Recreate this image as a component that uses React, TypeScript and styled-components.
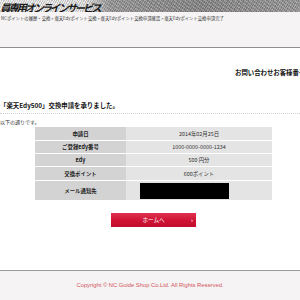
import React from "react";
import styled, { createGlobalStyle } from "styled-components";

const Global = createGlobalStyle`
  html, body { margin: 0; padding: 0; background: #fff; }
  body { width: 300px; height: 300px; overflow: hidden; font-family: "Noto Sans CJK JP", "Liberation Sans", sans-serif; color: #222; }
`;

const Page = styled.div`
  width: 300px;
  height: 300px;
  display: flex;
  flex-direction: column;
`;

const Header = styled.div`
  height: 12px;
  overflow: hidden;
  display: flex;
  align-items: flex-end;
  background:
    repeating-linear-gradient(37deg, rgba(255,255,255,0.22) 0 1px, transparent 1px 3px),
    repeating-linear-gradient(-61deg, rgba(0,0,0,0.18) 0 1px, transparent 1px 2px),
    linear-gradient(90deg, #f2f2f2 0px, #e6e6e6 85px, #9a9a9a 110px, #888 200px, #9a9a9a 300px);
`;

const HeaderTitle = styled.span`
  font-size: 10.5px;
  line-height: 11px;
  font-weight: 700;
  font-style: italic;
  letter-spacing: -2.2px;
  color: #1a1a1a;
  white-space: nowrap;
  margin-bottom: -1px;
`;

const Crumbs = styled.div`
  height: 36px;
  background: #f5f3f3;
  border-bottom: 1px solid #8e8e8e;
  padding: 3px 0 0 1px;
  box-sizing: border-box;
  font-size: 4.35px;
  line-height: 7px;
  color: #333;
  white-space: nowrap;
  overflow: hidden;
`;

const Main = styled.div`
  flex: 1;
  display: flex;
  flex-direction: column;
`;

const Contact = styled.div`
  margin-top: 21px;
  padding-left: 235px;
  font-size: 6.4px;
  line-height: 8px;
  font-weight: 700;
  white-space: nowrap;
  overflow: hidden;
  color: #111;
`;

const Title = styled.div`
  margin-top: 25px;
  font-size: 6.4px;
  line-height: 8px;
  font-weight: 700;
  padding-bottom: 3px;
  border-bottom: 1px dotted #cfcfcf;
  color: #111;
`;

const Note = styled.div`
  margin-top: 4px;
  font-size: 5px;
  line-height: 7px;
  color: #333;
`;

const Table = styled.div`
  margin: 2px 0 0 35px;
  width: 237px;
  display: grid;
  grid-template-columns: 91px 146px;
  row-gap: 1px;
`;

const Label = styled.div<{ $h: number }>`
  height: ${(p) => p.$h}px;
  background: #d3d3d3;
  display: flex;
  align-items: center;
  justify-content: center;
  font-size: 5.4px;
  font-weight: 700;
  color: #222;
`;

const Value = styled.div<{ $h: number }>`
  height: ${(p) => p.$h}px;
  background: #e4e4e4;
  display: flex;
  align-items: center;
  justify-content: center;
  font-size: 5.4px;
  color: #333;
`;

const Redacted = styled.div`
  width: 89px;
  height: 16px;
  background: #000;
  align-self: center;
  margin-right: 30px;
`;

const ButtonRow = styled.div`
  margin-top: 13px;
  display: flex;
  justify-content: center;
  padding-left: 7px;
`;

const HomeButton = styled.div`
  width: 85px;
  height: 14px;
  background: linear-gradient(180deg, #e0324f 0%, #cf1235 55%, #c10f2e 100%);
  color: #fff;
  font-size: 5.6px;
  display: flex;
  align-items: center;
  justify-content: center;
  position: relative;
`;

const Arrow = styled.span`
  position: absolute;
  right: 3px;
  top: 50%;
  transform: translateY(-50%);
  font-size: 6px;
  font-family: "Liberation Sans", sans-serif;
`;

const Footer = styled.div`
  height: 30px;
  border-top: 1px solid #9a9a9a;
  background: #f5f3f3;
  box-sizing: border-box;
  display: flex;
  justify-content: center;
  padding-top: 11px;
  font-family: "Liberation Sans", sans-serif;
  font-size: 5.8px;
  line-height: 6px;
  color: #d2545f;
  white-space: nowrap;
`;

const rows: { label: string; value: React.ReactNode; h: number }[] = [
  { label: "申請日", value: "2014年02月25日", h: 13 },
  { label: "ご登録Edy番号", value: "1000-0000-0000-1234", h: 12 },
  { label: "Edy", value: "500 円分", h: 12 },
  { label: "交換ポイント", value: "600ポイント", h: 13 },
  { label: "メール通知先", value: <Redacted />, h: 19 },
];

export default function App() {
  return (
    <Page>
      <Global />
      <Header>
        <HeaderTitle>員専用オンラインサービス</HeaderTitle>
      </Header>
      <Crumbs>
        NCポイントの履歴・交換 » 楽天Edyポイント交換 » 楽天Edyポイント交換申請確認 » 楽天Edyポイント交換申請完了
      </Crumbs>
      <Main>
        <Contact>お問い合わせお客様番号</Contact>
        <Title>「楽天Edy500」交換申請を承りました。</Title>
        <Note>以下の通りです。</Note>
        <Table>
          {rows.map((r) => (
            <React.Fragment key={r.label}>
              <Label $h={r.h}>{r.label}</Label>
              <Value $h={r.h}>{r.value}</Value>
            </React.Fragment>
          ))}
        </Table>
        <ButtonRow>
          <HomeButton>
            ホームへ
            <Arrow>›</Arrow>
          </HomeButton>
        </ButtonRow>
      </Main>
      <Footer>Copyright © NC Guide Shop Co.Ltd. All Rights Reserved.</Footer>
    </Page>
  );
}
